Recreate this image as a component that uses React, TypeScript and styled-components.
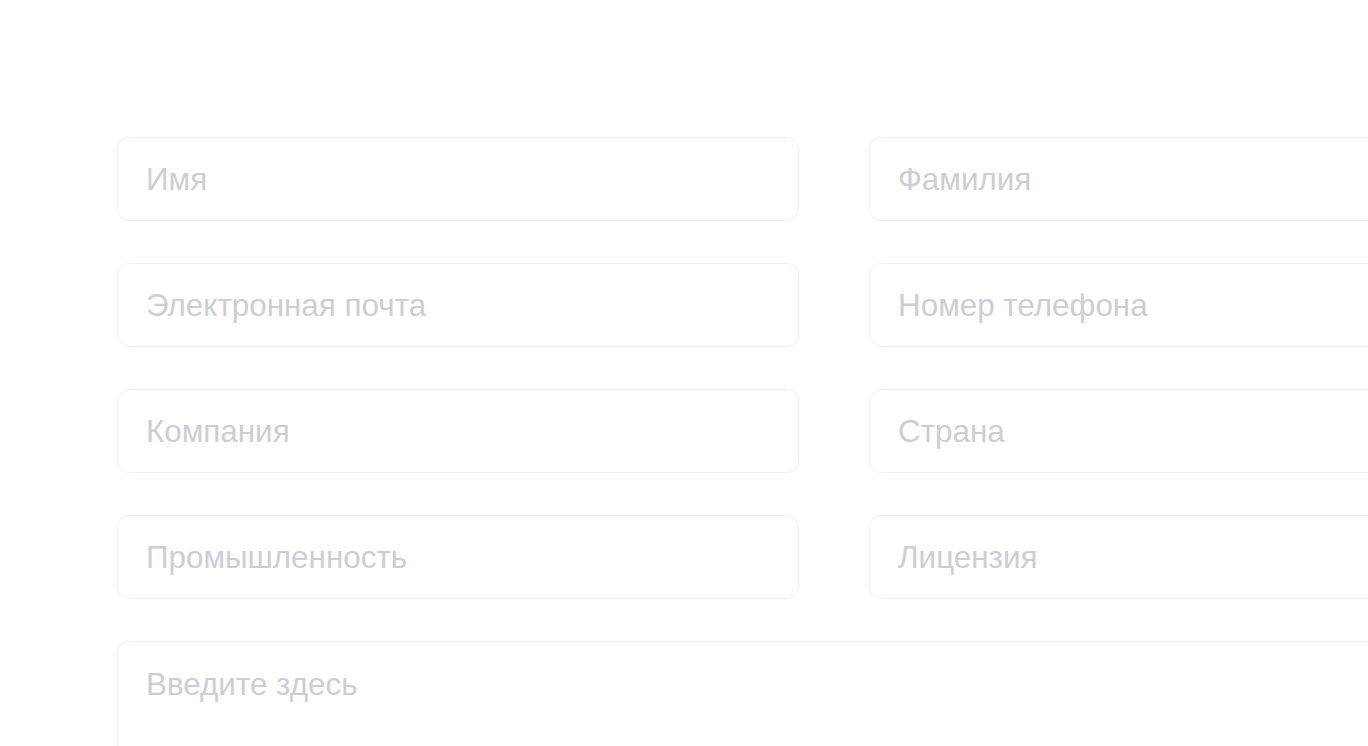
import React from 'react';
import styled, { createGlobalStyle } from 'styled-components';

const GlobalStyle = createGlobalStyle`
  html, body {
    margin: 0;
    padding: 0;
    background: #fff;
    overflow: hidden;
  }
  body {
    font-family: 'Liberation Sans', Arial, sans-serif;
  }
`;

const Page = styled.div`
  width: 1368px;
  height: 746px;
  overflow: hidden;
  padding: 137px 0 0 117px;
  box-sizing: border-box;
`;

const Form = styled.form`
  width: 1434px;
  display: grid;
  grid-template-columns: 682px 682px;
  column-gap: 70px;
  row-gap: 42px;
`;

const Field = styled.input`
  height: 84px;
  box-sizing: border-box;
  border: 1px solid #f0f0f2;
  border-radius: 12px;
  padding: 2px 28px 0;
  font-family: inherit;
  font-size: 31.4px;
  color: #333;
  background: #fff;
  outline: none;

  &::placeholder {
    color: #cecdd5;
  }
`;

const Message = styled.textarea`
  grid-column: 1 / -1;
  height: 200px;
  box-sizing: border-box;
  border: 1px solid #f0f0f2;
  border-radius: 12px;
  padding: 25px 28px;
  font-family: inherit;
  font-size: 31.4px;
  background: #fff;
  resize: none;
  outline: none;

  &::placeholder {
    color: #cecdd5;
  }
`;

const fields = [
  'Имя',
  'Фамилия',
  'Электронная почта',
  'Номер телефона',
  'Компания',
  'Страна',
  'Промышленность',
  'Лицензия',
];

const App = () => (
  <Page>
    <GlobalStyle />
    <Form>
      {fields.map((f) => (
        <Field key={f} placeholder={f} />
      ))}
      <Message placeholder="Введите здесь" />
    </Form>
  </Page>
);

export default App;
